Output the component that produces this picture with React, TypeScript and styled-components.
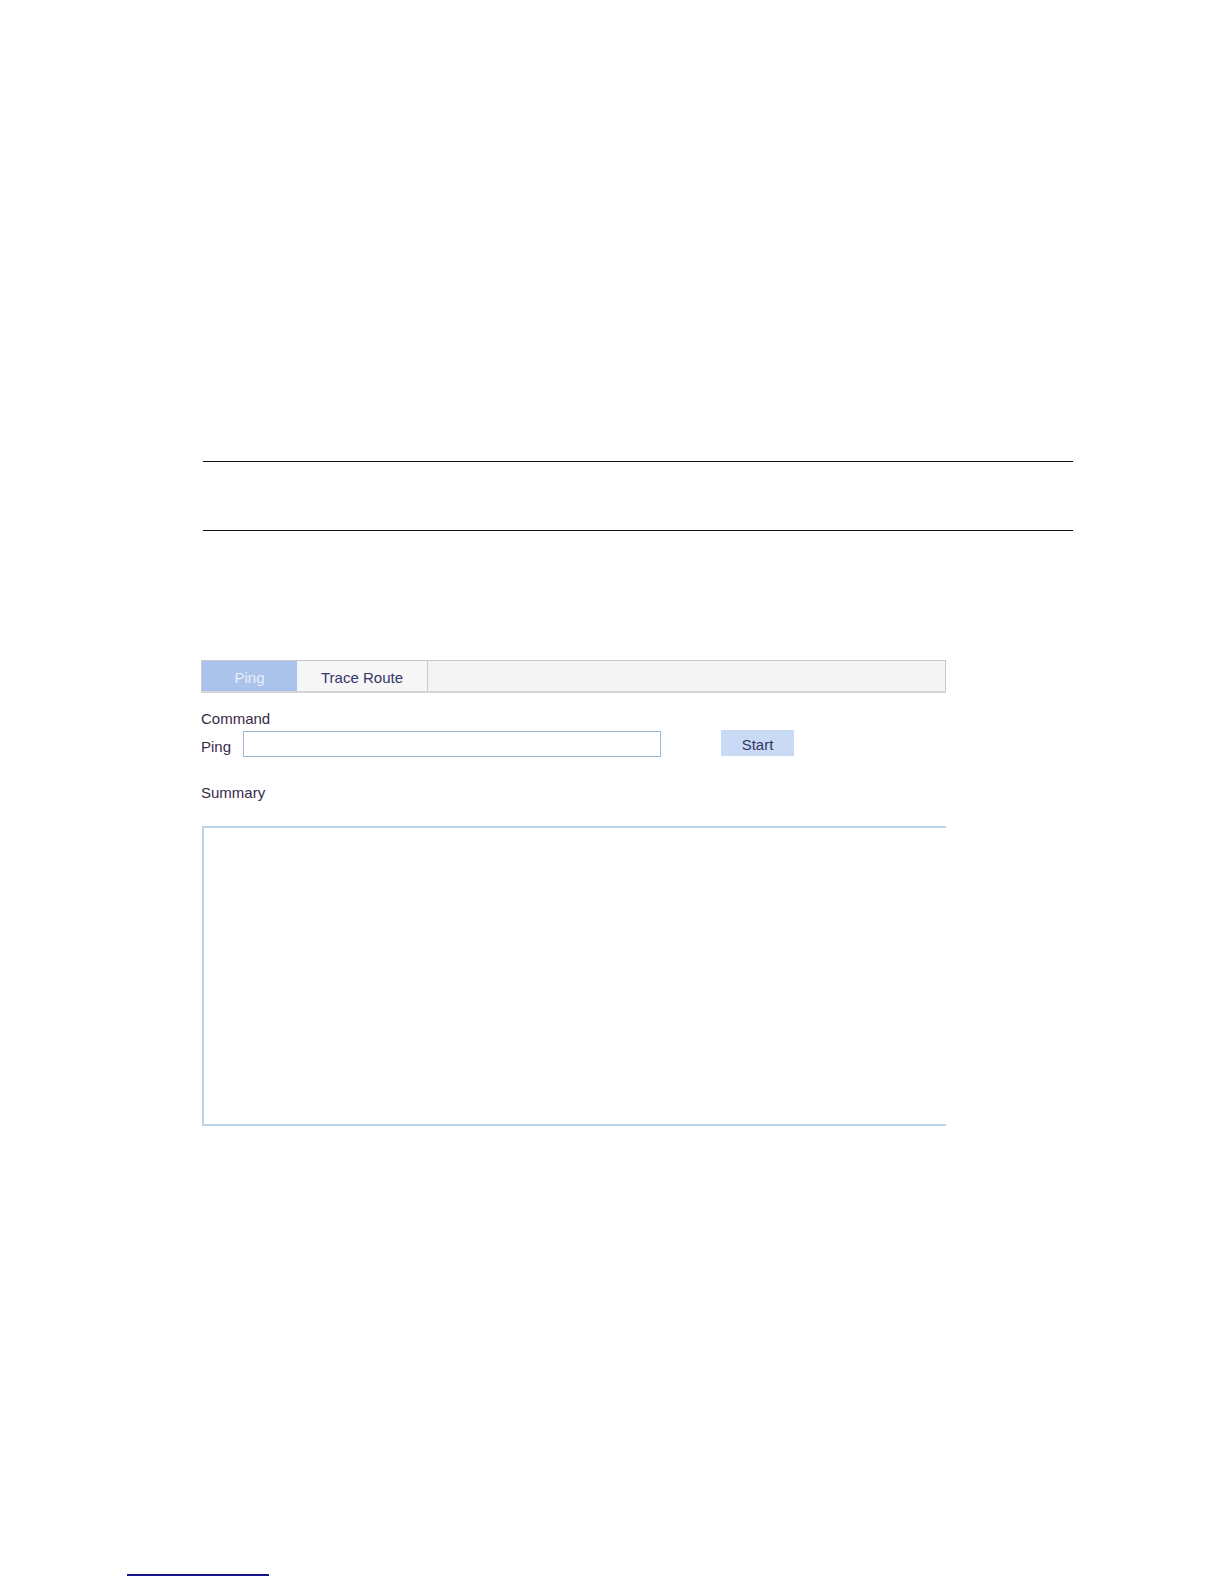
import React from 'react';
import styled, {createGlobalStyle} from 'styled-components';

const GlobalStyle = createGlobalStyle`
    html, body {
        margin: 0;
        padding: 0;
        background: #fff;
    }
    body {
        font-family: "Liberation Sans", Arial, sans-serif;
        font-size: 15px;
    }
`;

const Page = styled.div`
    width: 1224px;
    height: 1584px;
    padding-top: 461px;
    box-sizing: border-box;
    display: flex;
    flex-direction: column;
`;

const NoteBox = styled.div`
    margin-left: 203px;
    width: 870px;
    height: 68px;
    border-top: 1.5px solid #111;
    border-bottom: 1.5px solid #111;
`;

const Panel = styled.div`
    margin-top: 129px;
    margin-left: 201px;
    width: 745px;
    display: flex;
    flex-direction: column;
`;

const TabBar = styled.div`
    display: flex;
    height: 30px;
    background: #f4f4f4;
    border: 1px solid #c9c9c9;
    border-bottom-width: 2px;
    border-bottom-color: #d4d4d4;
`;

const Tab = styled.div<{ $active?: boolean; $width: number }>`
    width: ${p => p.$width}px;
    display: flex;
    align-items: center;
    justify-content: center;
    padding-top: 3px;
    box-sizing: border-box;
    background: ${p => (p.$active ? '#a9c3eb' : '#f6f6f6')};
    color: ${p => (p.$active ? '#e8effa' : '#35356a')};
    border-right: ${p => (p.$active ? 'none' : '1px solid #c9c9c9')};
    font-size: 15px;
`;

const Label = styled.div`
    color: #3a2a48;
    font-size: 15px;
    line-height: 18px;
`;

const CommandLabel = styled(Label)`
    margin-top: 17px;
`;

const PingLabel = styled(Label)`
    padding-top: 6px;
`;

const SummaryLabel = styled(Label)`
    margin-top: 26px;
`;

const Row = styled.div`
    display: flex;
    align-items: center;
    margin-top: 2px;
    height: 28px;
`;

const Input = styled.input`
    margin-left: 12px;
    width: 418px;
    height: 26px;
    box-sizing: border-box;
    border: 1px solid #9fb7d6;
    outline: none;
    padding: 0 4px;
    font-family: inherit;
    font-size: 15px;
`;

const Button = styled.button`
    margin-left: 60px;
    width: 73px;
    height: 26px;
    margin-top: -2px;
    border: none;
    background: #c9daf4;
    color: #35356a;
    font-family: inherit;
    font-size: 15px;
    padding: 2px 0 0;
`;

const Output = styled.div`
    margin-top: 24px;
    height: 300px;
    box-sizing: border-box;
    border: 2px solid #bcd2ea;
    border-right: none;
    margin-left: 1px;
`;

const Footnote = styled.div`
    margin-top: auto;
    margin-bottom: 8px;
    margin-left: 127px;
    width: 142px;
    border-top: 2px solid #16168a;
`;

export default function App() {
    return (
        <>
            <GlobalStyle />
            <Page>
                <NoteBox />
                <Panel>
                    <TabBar>
                        <Tab $active $width={95}>Ping</Tab>
                        <Tab $width={131}>Trace Route</Tab>
                    </TabBar>
                    <CommandLabel>Command</CommandLabel>
                    <Row>
                        <PingLabel>Ping</PingLabel>
                        <Input type="text" />
                        <Button>Start</Button>
                    </Row>
                    <SummaryLabel>Summary</SummaryLabel>
                    <Output />
                </Panel>
                <Footnote />
            </Page>
        </>
    );
}
